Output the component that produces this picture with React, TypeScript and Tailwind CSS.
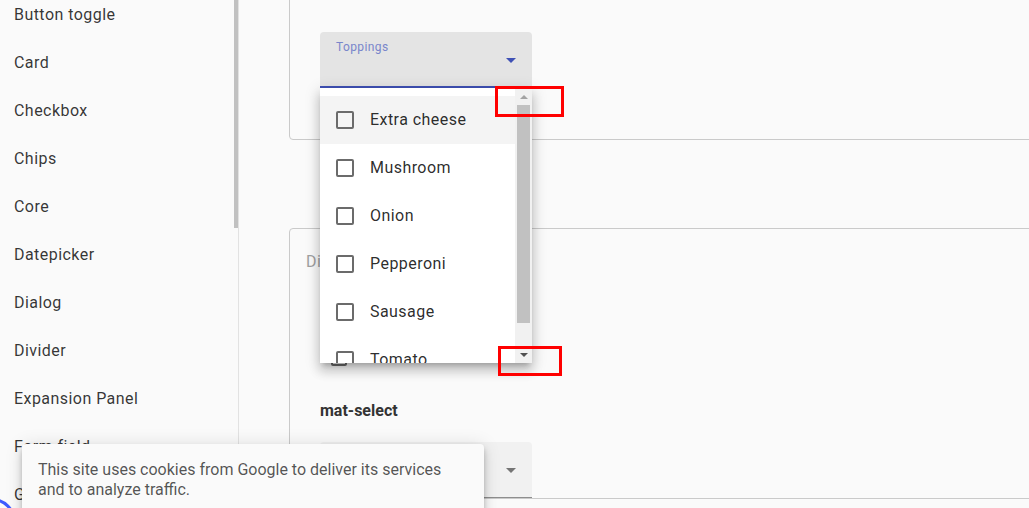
import React from "react";

const navItems = [
  "Button toggle",
  "Card",
  "Checkbox",
  "Chips",
  "Core",
  "Datepicker",
  "Dialog",
  "Divider",
  "Expansion Panel",
  "Form field",
  "Grid list",
];

const toppings = ["Extra cheese", "Mushroom", "Onion", "Pepperoni", "Sausage", "Tomato"];

const Arrow = ({ color }: { color: string }) => (
  <div
    className="w-0 h-0 border-l-[5px] border-r-[5px] border-t-[5px] border-l-transparent border-r-transparent"
    style={{ borderTopColor: color }}
  />
);

const Box = () => (
  <div className="w-[18px] h-[18px] shrink-0 rounded-[2px] border-2 border-[#6b6b6b]" />
);

const App = () => {
  return (
    <div
      className="relative w-[1029px] h-[508px] overflow-hidden bg-[#fafafa] flex"
      style={{ fontFamily: "Roboto, 'Noto Sans', sans-serif" }}
    >
      {/* side nav */}
      <aside className="relative w-[239px] shrink-0 border-r border-[#e2e2e2]">
        <div className="-mt-[9px]">
          {navItems.map((item) => (
            <div
              key={item}
              className="h-12 flex items-center px-[14px] text-[16px] tracking-[0.45px] text-[rgba(0,0,0,0.8)]"
            >
              {item}
            </div>
          ))}
        </div>
        <div className="absolute right-0 top-0 w-[4px] h-[228px] bg-[#c1c1c1]" />
      </aside>

      {/* content */}
      <main className="flex-1 pl-[50px] overflow-hidden">
        <div className="w-[800px] -mt-[40px] border border-[#cacaca] rounded pt-[71px] pb-[51px] px-[30px]">
          <div className="w-[212px] h-[56px] bg-[#e4e4e4] rounded-t-[4px] border-b-2 border-[#3f51b5] flex justify-between px-4">
            <span className="pt-[8px] text-[12px] leading-[14px] tracking-[0.4px] text-[#7986cb]">Toppings</span>
            <div className="self-center mt-[3px]">
              <Arrow color="#3f51b5" />
            </div>
          </div>
        </div>

        <div className="w-[800px] mt-[88px] border border-[#cacaca] rounded pt-[23px] pl-4">
          <div className="text-[16px] leading-[20px] tracking-[0.45px] text-[#a0a0a0]">Disabled select</div>
          <div className="pl-[14px]">
            <div className="mt-[74px] h-6 flex items-center gap-[9px] pl-[11px]">
              <div className="w-4 h-4 rounded-[2px] border-2 border-[#6b6b6b]" />
              <span className="text-[16px] text-[rgba(0,0,0,0.8)]">Disable select</span>
            </div>
            <div className="mt-[31px] text-[16px] leading-[20px] font-bold text-[#333]">mat-select</div>
            <div className="mt-[21px] w-[212px] h-[56px] bg-[#f1f1f1] rounded-t-[4px] border-b border-[#8e8e8e] flex items-center justify-end px-4">
              <div className="mt-[1px]">
                <Arrow color="#757575" />
              </div>
            </div>
          </div>
        </div>
      </main>

      {/* open select panel */}
      <div className="absolute left-[320px] top-[88px] w-[212px] h-[275px] bg-white flex overflow-hidden shadow-[0_5px_5px_-3px_rgba(0,0,0,0.2),0_8px_10px_1px_rgba(0,0,0,0.14),0_3px_14px_2px_rgba(0,0,0,0.12)]">
        <div className="flex-1 pt-2">
          {toppings.map((t, i) => (
            <div
              key={t}
              className={`h-12 flex items-center gap-4 px-4 text-[16px] tracking-[0.45px] text-[rgba(0,0,0,0.84)] ${i === 0 ? "bg-[#f4f4f4]" : ""}`}
            >
              <Box />
              <span>{t}</span>
            </div>
          ))}
        </div>
        <div className="w-[17px] shrink-0 bg-[#f1f1f1] flex flex-col">
          <div className="h-[17px] flex items-center justify-center">
            <div className="w-0 h-0 border-l-[4px] border-r-[4px] border-b-[4px] border-l-transparent border-r-transparent border-b-[#a3a3a3]" />
          </div>
          <div className="flex-1 px-[2px]">
            <div className="h-[218px] bg-[#c1c1c1]" />
          </div>
          <div className="h-[17px] flex items-center justify-center">
            <div className="w-0 h-0 border-l-[4px] border-r-[4px] border-t-[4px] border-l-transparent border-r-transparent border-t-[#505050]" />
          </div>
        </div>
      </div>

      {/* annotation boxes */}
      <div className="absolute left-[495px] top-[86px] w-[69px] h-[31px] border-[3px] border-[#ff0000]" />
      <div className="absolute left-[498px] top-[346px] w-[64px] h-[30px] border-[3px] border-[#ff0000]" />

      {/* cookie bar */}
      <div className="absolute left-[22px] top-[444px] w-[462px] h-[90px] bg-[#fafafa] rounded-[4px] px-4 pt-[16px] text-[16px] leading-[20px] text-[rgba(0,0,0,0.68)] shadow-[0_3px_5px_-1px_rgba(0,0,0,0.2),0_6px_10px_0_rgba(0,0,0,0.14),0_1px_18px_0_rgba(0,0,0,0.12)]">
        <p className="whitespace-nowrap">
          This site uses cookies from Google to deliver its services
          <br />
          and to analyze traffic.
        </p>
      </div>

      {/* focus ring bottom-left */}
      <div className="absolute left-[-32px] top-[498px] w-[48px] h-[48px] rounded-full border-[3px] border-[#3d5afe]" />
    </div>
  );
};

export default App;
